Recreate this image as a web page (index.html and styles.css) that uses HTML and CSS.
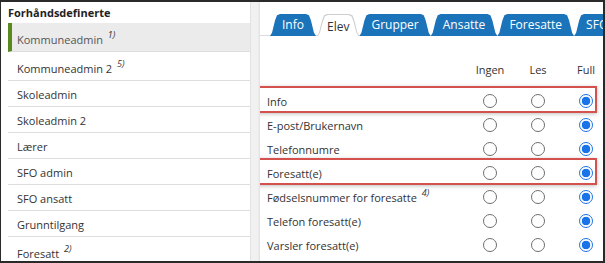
FILE: index.html
```html
<!DOCTYPE html>
<html lang="no">

<head>
    <meta charset="utf-8" />
    <title>Tilgangsroller</title>
    <link rel="stylesheet" href="styles.css">
</head>

<body>
    <div class="frame">
        <aside class="roles">
            <div class="roles-title">Forhåndsdefinerte</div>
            <ul class="role-list">
                <li class="role tall selected">Kommuneadmin <sup>1)</sup></li>
                <li class="role tall">Kommuneadmin 2 <sup>5)</sup></li>
                <li class="role">Skoleadmin</li>
                <li class="role">Skoleadmin 2</li>
                <li class="role">Lærer</li>
                <li class="role">SFO admin</li>
                <li class="role">SFO ansatt</li>
                <li class="role">Grunntilgang</li>
                <li class="role tall">Foresatt <sup>2)</sup></li>
            </ul>
        </aside>
        <div class="gutter"></div>
        <main class="rights">
            <nav class="tabs">
                <div class="tab">Info</div>
                <div class="tab active"><span>Elev</span></div>
                <div class="tab">Grupper</div>
                <div class="tab">Ansatte</div>
                <div class="tab">Foresatte</div>
                <div class="tab">SFO</div>
            </nav>
            <div class="perm-head">
                <div></div>
                <div class="col">Ingen</div>
                <div class="col">Les</div>
                <div class="col">Full</div>
            </div>
            <div class="perm-list">
                <div class="perm marked">
                    <div class="label">Info</div>
                    <div class="cell"><span class="radio"></span></div>
                    <div class="cell"><span class="radio"></span></div>
                    <div class="cell"><span class="radio on"></span></div>
                </div>
                <div class="perm">
                    <div class="label">E-post/Brukernavn</div>
                    <div class="cell"><span class="radio"></span></div>
                    <div class="cell"><span class="radio"></span></div>
                    <div class="cell"><span class="radio on"></span></div>
                </div>
                <div class="perm">
                    <div class="label">Telefonnumre</div>
                    <div class="cell"><span class="radio"></span></div>
                    <div class="cell"><span class="radio"></span></div>
                    <div class="cell"><span class="radio on"></span></div>
                </div>
                <div class="perm marked">
                    <div class="label">Foresatt(e)</div>
                    <div class="cell"><span class="radio"></span></div>
                    <div class="cell"><span class="radio"></span></div>
                    <div class="cell"><span class="radio on"></span></div>
                </div>
                <div class="perm">
                    <div class="label">Fødselsnummer for foresatte <sup>4)</sup></div>
                    <div class="cell"><span class="radio"></span></div>
                    <div class="cell"><span class="radio"></span></div>
                    <div class="cell"><span class="radio on"></span></div>
                </div>
                <div class="perm">
                    <div class="label">Telefon foresatt(e)</div>
                    <div class="cell"><span class="radio"></span></div>
                    <div class="cell"><span class="radio"></span></div>
                    <div class="cell"><span class="radio on"></span></div>
                </div>
                <div class="perm">
                    <div class="label">Varsler foresatt(e)</div>
                    <div class="cell"><span class="radio"></span></div>
                    <div class="cell"><span class="radio"></span></div>
                    <div class="cell"><span class="radio on"></span></div>
                </div>
                <div class="perm">
                    <div class="label"></div>
                    <div class="cell"><span class="radio"></span></div>
                    <div class="cell"><span class="radio"></span></div>
                    <div class="cell"><span class="radio on"></span></div>
                </div>
            </div>
        </main>
    </div>
</body>

</html>
```

FILE: styles.css
```css
html,
body {
    margin: 0;
    padding: 0;
    background: #ffffff;
    overflow: hidden;
}

.frame {
    box-sizing: border-box;
    width: 605px;
    height: 263px;
    border-style: solid;
    border-color: #2a2a2a;
    border-width: 2px 2px 2px 1px;
    display: grid;
    grid-template-columns: 249px 10px 1fr;
    overflow: hidden;
    font-family: "Open Sans", "DejaVu Sans", sans-serif;
    font-size: 11px;
    color: #333333;
}

/* left column: predefined roles */
.roles {
    padding-left: 7px;
    background: #ffffff;
}

.roles-title {
    height: 21px;
    line-height: 21px;
    font-weight: bold;
    color: #222222;
}

.role-list {
    list-style: none;
    margin: 0;
    padding: 0;
}

.role {
    box-sizing: border-box;
    height: 26px;
    padding: 2px 0 0 9px;
    line-height: 23px;
    border-bottom: 1px solid #dedede;
    white-space: nowrap;
}

.role.tall {
    height: 29px;
    padding-top: 6px;
    line-height: 22px;
}

.role.selected {
    background: #ebebeb;
    border-left: 4px solid #5a8a1e;
    padding-left: 5px;
    color: #555555;
}

sup {
    font-size: 9px;
    font-style: italic;
    vertical-align: 6px;
    line-height: 0;
    margin-left: 2px;
    color: #333333;
}

.gutter {
    background: #f1f1f1;
    border-left: 1px solid #e2e2e2;
}

/* right column: rights per tab */
.rights {
    position: relative;
    background: #ffffff;
    box-shadow: -1px 0 2px rgba(0, 0, 0, 0.08);
    overflow: hidden;
}

.tabs {
    display: flex;
    align-items: flex-end;
    height: 22px;
    margin-top: 11px;
    padding-left: 10px;
    border-bottom: 1px solid #dcdcdc;
}

.tab {
    position: relative;
    flex: none;
    height: 22px;
    margin-bottom: -1px;
    padding: 0 12px;
    font-size: 12px;
    line-height: 22px;
    color: #ffffff;
    background: #1b74b9;
    white-space: nowrap;
    clip-path: polygon(0 100%, 2px 85%, 5px 30%, 7px 6%, 10px 0, calc(100% - 10px) 0, calc(100% - 7px) 6%, calc(100% - 5px) 30%, calc(100% - 2px) 85%, 100% 100%);
}

.tab.active {
    margin-left: 1px;
    padding: 0 10px;
    background: #cfcfcf;
    color: #333333;
    line-height: 25px;
}

.tab.active::before {
    content: "";
    position: absolute;
    inset: 1px 1px 0 1px;
    background: #ffffff;
    clip-path: polygon(0 100%, 2px 85%, 5px 30%, 7px 6%, 10px 0, calc(100% - 10px) 0, calc(100% - 7px) 6%, calc(100% - 5px) 30%, calc(100% - 2px) 85%, 100% 100%);
}

.tab.active span {
    position: relative;
}

.perm-head,
.perm {
    display: grid;
    grid-template-columns: 1fr 48px 48px 48px;
    width: 350px;
    height: 24px;
    align-items: center;
}

.perm-head {
    margin-top: 21px;
    margin-bottom: 8px;
}

.col {
    text-align: center;
}

.perm {
    position: relative;
}

.label {
    padding-left: 7px;
    white-space: nowrap;
}

.perm.marked::after {
    content: "";
    position: absolute;
    top: -3px;
    bottom: 0;
    left: -3px;
    right: 13px;
    border: 2px solid #d5514e;
    box-shadow: 0 1px 4px rgba(0, 0, 0, 0.25);
    pointer-events: none;
}

.cell {
    display: flex;
    justify-content: center;
}

.radio {
    box-sizing: border-box;
    width: 14px;
    height: 14px;
    border: 1px solid #6f6f6f;
    border-radius: 50%;
    background: #ffffff;
}

.radio.on {
    border: 1.5px solid #1a73e8;
    background: radial-gradient(circle, #1a73e8 0 4px, #ffffff 4.6px);
}
```
